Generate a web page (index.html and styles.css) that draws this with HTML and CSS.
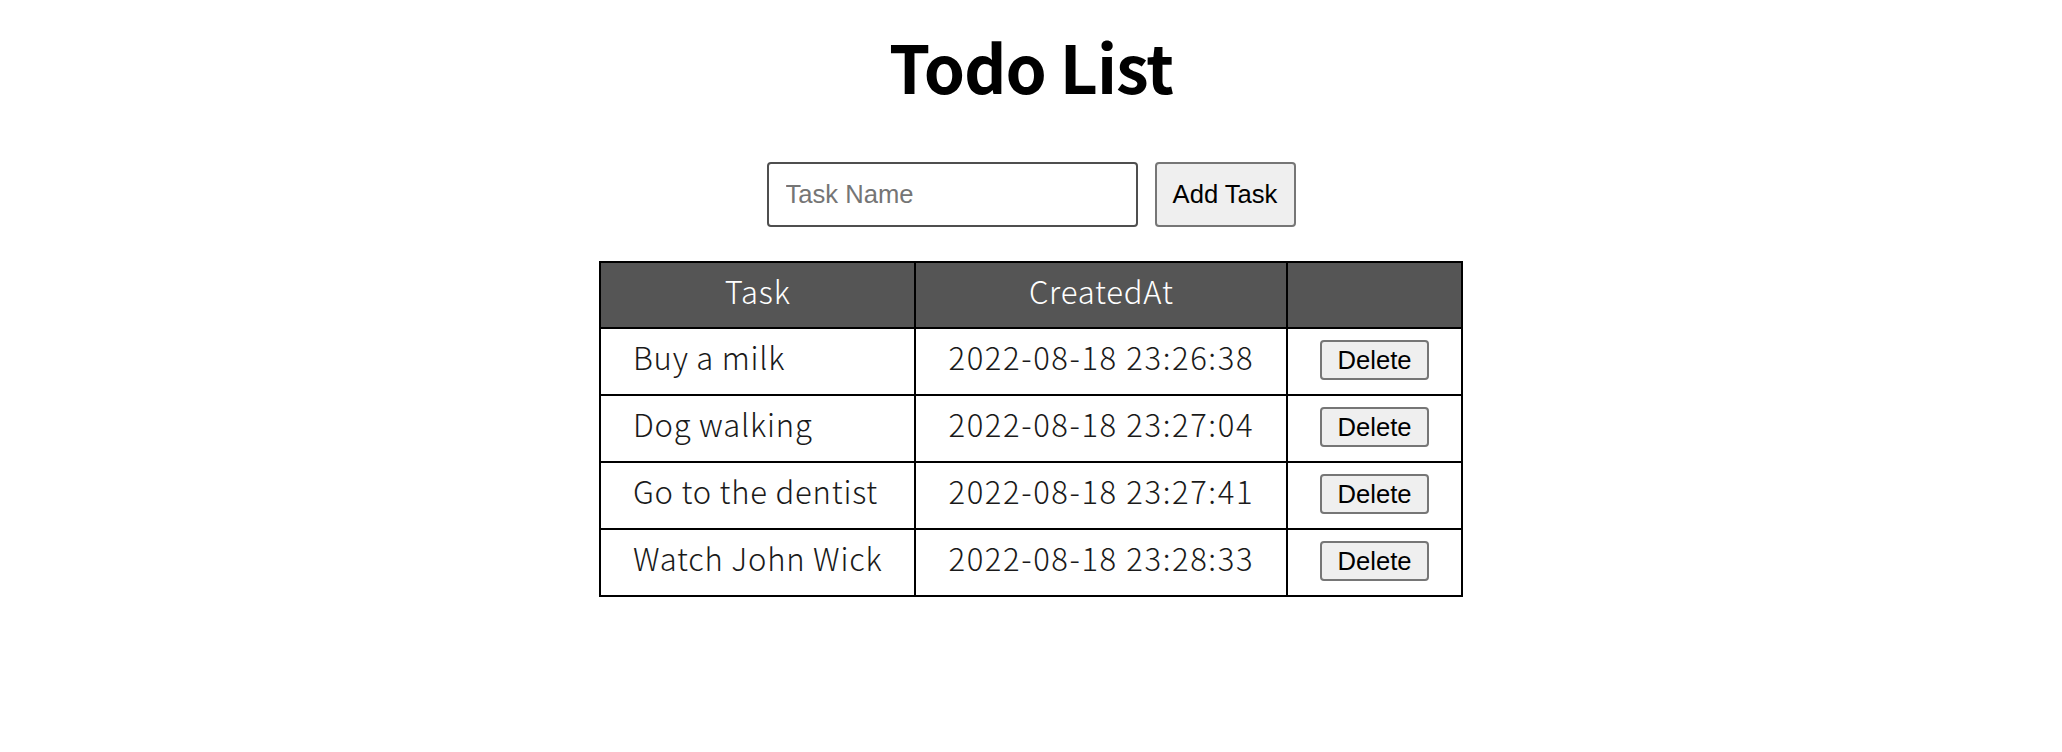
FILE: index.html
```html
<!DOCTYPE html>
<html lang="ja">
<head>
<meta charset="utf-8">
<title>Todo List</title>
<link rel="stylesheet" href="styles.css">
</head>
<body>
<div class="app">
  <h1 class="title">Todo List</h1>
  <form class="add-form">
    <input class="task-input" type="text" placeholder="Task Name">
    <button class="add-btn" type="button">Add Task</button>
  </form>
  <table class="todo-table">
    <thead>
      <tr><th>Task</th><th>CreatedAt</th><th></th></tr>
    </thead>
    <tbody>
      <tr><td>Buy a milk</td><td class="date">2022-08-18 23:26:38</td><td class="act"><button class="del-btn" type="button">Delete</button></td></tr>
      <tr><td>Dog walking</td><td class="date">2022-08-18 23:27:04</td><td class="act"><button class="del-btn" type="button">Delete</button></td></tr>
      <tr><td>Go to the dentist</td><td class="date">2022-08-18 23:27:41</td><td class="act"><button class="del-btn" type="button">Delete</button></td></tr>
      <tr><td>Watch John Wick</td><td class="date">2022-08-18 23:28:33</td><td class="act"><button class="del-btn" type="button">Delete</button></td></tr>
    </tbody>
  </table>
</div>
</body>
</html>
```

FILE: styles.css
```css
html, body {
  margin: 0;
  padding: 0;
  background: #fff;
}
.app {
  display: flex;
  flex-direction: column;
  align-items: center;
  font-family: "Noto Sans CJK JP", "Noto Sans", sans-serif;
  color: #000;
}
.title {
  margin: 15px 0 0;
  font-size: 66px;
  letter-spacing: -1px;
  font-weight: 700;
  line-height: 100px;
}
.add-form {
  display: flex;
  gap: 17px;
  margin: 47px 0 0;
}
.task-input {
  box-sizing: border-box;
  width: 371px;
  height: 65px;
  border: 2px solid #4f4f4f;
  border-radius: 4px;
  padding: 0 17px;
  font-family: "Liberation Sans", Arial, sans-serif;
  font-size: 25.6px;
  color: #000;
  background: #fff;
  outline: none;
}
.task-input::placeholder {
  color: #757575;
}
.add-btn {
  box-sizing: border-box;
  width: 141px;
  height: 65px;
  border: 2px solid #767676;
  border-radius: 4px;
  background: #efefef;
  font-family: "Liberation Sans", Arial, sans-serif;
  font-size: 25.6px;
  color: #000;
  padding: 0;
}
.todo-table {
  margin-top: 34px;
  border-collapse: collapse;
  border: 2px solid #000;
  font-weight: 300;
  font-size: 31px;
  letter-spacing: 0.8px;
}
.todo-table th,
.todo-table td {
  border: 2px solid #000;
  padding: 0 32px 10px;
  box-sizing: border-box;
  vertical-align: middle;
  white-space: nowrap;
}
.todo-table th {
  height: 66px;
  background: #555;
  color: #fff;
  font-weight: 300;
  text-align: center;
}
.todo-table td {
  height: 67px;
  text-align: left;
  color: #1a1a1a;
}
.todo-table td.date {
  letter-spacing: 1.6px;
}
.todo-table td.act {
  text-align: center;
  letter-spacing: 0;
}
.del-btn {
  box-sizing: border-box;
  width: 109px;
  height: 40px;
  border: 2px solid #767676;
  border-radius: 4px;
  background: #efefef;
  font-family: "Liberation Sans", Arial, sans-serif;
  font-size: 25.6px;
  color: #000;
  padding: 0;
  vertical-align: middle;
}
```
